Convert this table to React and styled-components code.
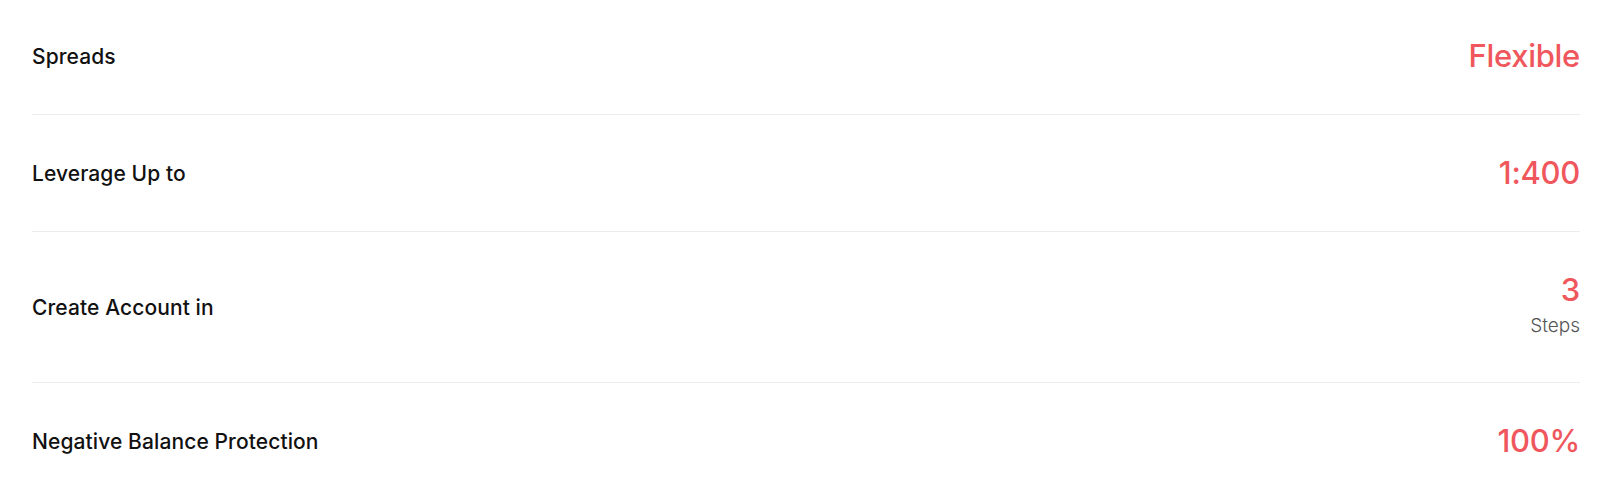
import React from "react";
import styled, { createGlobalStyle } from "styled-components";

const GlobalStyle = createGlobalStyle`
	body {
		margin: 0;
		background: #ffffff;
		font-family: Inter, "Noto Sans", sans-serif;
	}
`;

const rows = [
	{ label: "Spreads", value: "Flexible" },
	{ label: "Leverage Up to", value: "1:400" },
	{ label: "Create Account in", value: "3", note: "Steps" },
	{ label: "Negative Balance Protection", value: "100%" },
];

const App = () => {
	return (
		<>
			<GlobalStyle />
			<List>
				{rows.map((row) => (
					<Row key={row.label}>
						<Label>{row.label}</Label>
						<ValueBox>
							<Value>{row.value}</Value>
							{row.note && <Note>{row.note}</Note>}
						</ValueBox>
					</Row>
				))}
			</List>
		</>
	);
};

const List = styled.div`
	display: flex;
	flex-direction: column;
	padding: 0 20px 0 32px;
`;

const Row = styled.div`
	display: flex;
	align-items: center;
	justify-content: space-between;
	padding: 40px 0;
	border-bottom: 1px solid #ececec;

	&:first-child {
		padding-top: 38px;
	}

	&:last-child {
		border-bottom: none;
	}
`;

const Label = styled.span`
	font-size: 21px;
	font-weight: 500;
	color: #111111;
	letter-spacing: 0.1px;
`;

const ValueBox = styled.div`
	display: flex;
	flex-direction: column;
	align-items: flex-end;
`;

const Value = styled.span`
	font-size: 31px;
	line-height: 36px;
	font-weight: 500;
	color: #ef575d;
	letter-spacing: -0.3px;
`;

const Note = styled.span`
	margin-top: 2px;
	font-size: 19px;
	line-height: 32px;
	font-weight: 300;
	color: #555555;
`;

export default App;
